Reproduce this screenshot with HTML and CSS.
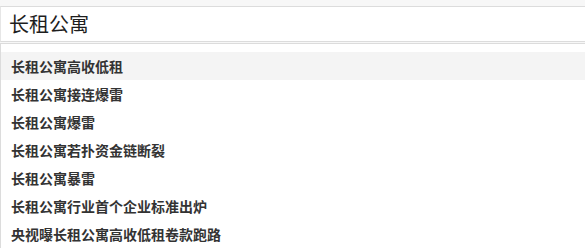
FILE: index.html
```html
<!DOCTYPE html>
<html lang="zh">
<head>
<meta charset="utf-8">
<link rel="stylesheet" href="styles.css">
</head>
<body>
<div class="page">
  <div class="search">长租公寓</div>
  <ul class="suggest">
    <li class="item active">长租公寓高收低租</li>
    <li class="item">长租公寓接连爆雷</li>
    <li class="item">长租公寓爆雷</li>
    <li class="item">长租公寓若扑资金链断裂</li>
    <li class="item">长租公寓暴雷</li>
    <li class="item">长租公寓行业首个企业标准出炉</li>
    <li class="item">央视曝长租公寓高收低租卷款跑路</li>
  </ul>
</div>
</body>
</html>
```
FILE: styles.css
```css
html, body {
  margin: 0;
  padding: 0;
  background: #f7f7f7;
  font-family: "Noto Sans CJK SC", "Microsoft YaHei", sans-serif;
}
.page {
  padding-top: 6px;
  height: 248px;
  overflow: hidden;
  box-sizing: border-box;
}
.search {
  height: 34px;
  border-top: 1px solid #dcdcdc;
  border-bottom: 1px solid #dcdcdc;
  border-left: 1px solid #e6e6e6;
  background: #fff;
  padding-left: 8px;
  font-size: 20px;
  line-height: 34px;
  color: #1e1e1e;
  box-sizing: content-box;
}
.suggest {
  list-style: none;
  margin: 1px 0 0 0;
  padding: 8px 0 0 0;
  background: #fff;
  border-top: 1px solid #dcdcdc;
  border-left: 1px solid #dcdcdc;
  height: 300px;
}
.item {
  height: 28px;
  line-height: 28px;
  padding-left: 10px;
  font-size: 14px;
  font-weight: bold;
  color: #333;
}
.item.active {
  background: #f4f4f4;
}
```
